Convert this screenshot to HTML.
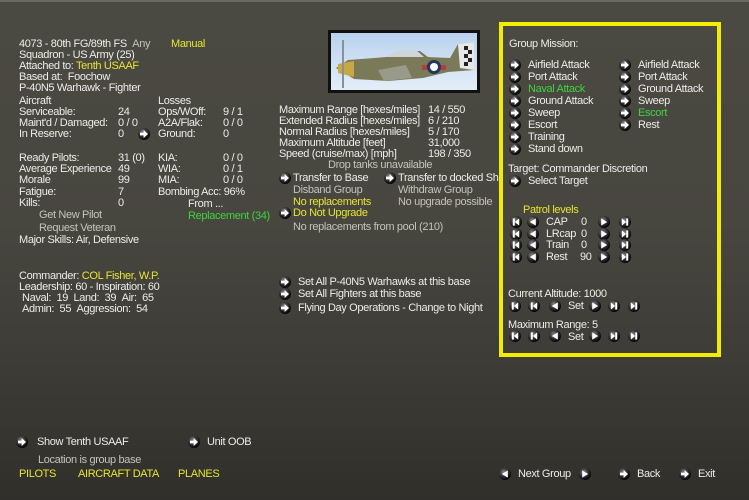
<!DOCTYPE html>
<html><head><meta charset="utf-8"><style>
*{margin:0;padding:0;box-sizing:border-box}
body{width:749px;height:500px;overflow:hidden;background:linear-gradient(180deg,#4b4a42 0%,#47463f 45%,#3d3c36 72%,#302f2b 100%);font-family:"Liberation Sans",sans-serif;font-size:11px;color:#ececec;position:relative;letter-spacing:-0.35px}
.t{position:absolute;line-height:14px;height:14px;white-space:nowrap}
.y{color:#e6e632}.g{color:#3fd23f}.d{color:#c4c4bc}
.b{position:absolute;width:12px;height:12px;border-radius:50%;background:radial-gradient(circle at 40% 35%,#888 0%,#333 40%,#000 75%)}
.b::after{content:'';position:absolute;left:2px;top:2px;width:8px;height:8px;background:#fff}
.r::after{clip-path:polygon(0 33%,45% 33%,45% 0,100% 50%,45% 100%,45% 67%,0 67%)}
.tl::after{clip-path:polygon(85% 5%,85% 95%,10% 50%)}
.tr::after{clip-path:polygon(15% 5%,15% 95%,90% 50%)}
.tl2::after{clip-path:polygon(90% 5%,90% 95%,35% 50%,35% 95%,10% 95%,10% 5%,35% 5%,35% 50%)}
.tr2::after{clip-path:polygon(10% 5%,10% 95%,65% 50%,65% 95%,90% 95%,90% 5%,65% 5%,65% 50%)}
#box{position:absolute;left:499px;top:22px;width:222px;height:335px;border:4px solid #f4ec00}
</style></head><body>
<div style="position:absolute;left:0;top:0;width:749px;height:2px;background:#6a6963"></div>
<div id="box"></div>

<div class="t" style="left:19px;top:37px">4073 - 80th FG/89th FS &nbsp;<span class="d">Any</span></div>
<div class="t y" style="left:171px;top:37px">Manual</div>
<div class="t" style="left:19px;top:48px">Squadron - US Army (25)</div>
<div class="t" style="left:19px;top:59px">Attached to: <span class="y">Tenth USAAF</span></div>
<div class="t" style="left:19px;top:70px">Based at: &nbsp;Foochow</div>
<div class="t" style="left:19px;top:81px">P-40N5 Warhawk - Fighter</div>

<div class="t" style="left:19px;top:94px">Aircraft</div>
<div class="t" style="left:19px;top:105px">Serviceable:</div>
<div class="t" style="left:19px;top:116px">Maint'd / Damaged:</div>
<div class="t" style="left:19px;top:127px">In Reserve:</div>
<div class="t" style="left:118px;top:105px">24</div>
<div class="t" style="left:118px;top:116px">0 / 0</div>
<div class="t" style="left:118px;top:127px">0</div>
<span class="b r" style="left:138px;top:128px"></span>
<div class="t" style="left:158px;top:94px">Losses</div>
<div class="t" style="left:158px;top:105px">Ops/WOff:</div>
<div class="t" style="left:158px;top:116px">A2A/Flak:</div>
<div class="t" style="left:158px;top:127px">Ground:</div>
<div class="t" style="left:223px;top:105px">9 / 1</div>
<div class="t" style="left:223px;top:116px">0 / 0</div>
<div class="t" style="left:223px;top:127px">0</div>

<div class="t" style="left:19px;top:151px">Ready Pilots:</div>
<div class="t" style="left:19px;top:162px">Average Experience</div>
<div class="t" style="left:19px;top:173px">Morale</div>
<div class="t" style="left:19px;top:185px">Fatigue:</div>
<div class="t" style="left:19px;top:196px">Kills:</div>
<div class="t" style="left:118px;top:151px">31 (0)</div>
<div class="t" style="left:118px;top:162px">49</div>
<div class="t" style="left:118px;top:173px">99</div>
<div class="t" style="left:118px;top:185px">7</div>
<div class="t" style="left:118px;top:196px">0</div>
<div class="t" style="left:158px;top:151px">KIA:</div>
<div class="t" style="left:158px;top:162px">WIA:</div>
<div class="t" style="left:158px;top:173px">MIA:</div>
<div class="t" style="left:158px;top:185px">Bombing Acc: 96%</div>
<div class="t" style="left:223px;top:151px">0 / 0</div>
<div class="t" style="left:223px;top:162px">0 / 1</div>
<div class="t" style="left:223px;top:173px">0 / 0</div>
<div class="t" style="left:188px;top:197px">From ...</div>
<div class="t g" style="left:188px;top:209px">Replacement (34)</div>
<div class="t d" style="left:39px;top:208px">Get New Pilot</div>
<div class="t d" style="left:39px;top:221px">Request Veteran</div>
<div class="t" style="left:19px;top:233px">Major Skills: Air, Defensive</div>

<svg style="position:absolute;left:328px;top:30px" width="152" height="63" viewBox="0 0 152 63">
<defs><linearGradient id="sk" x1="0" y1="0" x2="0" y2="1"><stop offset="0" stop-color="#b9d2ee"/><stop offset="1" stop-color="#e4eef8"/></linearGradient></defs>
<rect x="0" y="0" width="152" height="63" fill="#111"/>
<rect x="3" y="3" width="146" height="57" fill="url(#sk)"/>
<path d="M8 38 L20 30 L58 27 L70 21 L92 21 L100 27 L122 28 L130 14 L146 12 L146 40 L120 42 L95 48 L60 51 L26 49 Z" fill="#7b7a58"/>
<path d="M58 27 L68 21 L88 20 L96 27 Z" fill="#cfd5d8"/>
<path d="M130 14 L146 12 L146 40 L132 38 Z" fill="#e8e8e8"/>
<path d="M136 16h4v4h-4zM140 20h4v4h-4zM136 24h4v4h-4zM140 28h4v4h-4zM136 32h4v4h-4z" fill="#222"/>
<path d="M10 34 L26 31 L26 47 L10 43 Z" fill="#c8a840"/>
<rect x="94" y="35" width="24" height="5" fill="#b04040"/>
<circle cx="106" cy="37" r="7" fill="#23365c"/><circle cx="106" cy="37" r="4" fill="#fff"/>
<line x1="15" y1="10" x2="15" y2="58" stroke="#8890a0" stroke-width="2"/>
<path d="M50 40 L78 35 L84 48 L56 51 Z" fill="#9a9a8a"/>
</svg>

<div class="t" style="left:279px;top:103px">Maximum Range [hexes/miles]</div>
<div class="t" style="left:279px;top:114px">Extended Radius [hexes/miles]</div>
<div class="t" style="left:279px;top:125px">Normal Radius [hexes/miles]</div>
<div class="t" style="left:279px;top:136px">Maximum Altitude [feet]</div>
<div class="t" style="left:279px;top:147px">Speed (cruise/max) [mph]</div>
<div class="t" style="left:428px;top:103px">14 / 550</div>
<div class="t" style="left:428px;top:114px">6 / 210</div>
<div class="t" style="left:428px;top:125px">5 / 170</div>
<div class="t" style="left:428px;top:136px">31,000</div>
<div class="t" style="left:428px;top:147px">198 / 350</div>
<div class="t d" style="left:328px;top:158px">Drop tanks unavailable</div>
<span class="b r" style="left:279px;top:172px"></span>
<div class="t" style="left:293px;top:171px">Transfer to Base</div>
<span class="b r" style="left:384px;top:172px"></span>
<div class="t" style="left:398px;top:171px;width:101px;overflow:hidden">Transfer to docked Ship</div>
<div class="t d" style="left:293px;top:183px">Disband Group</div>
<div class="t d" style="left:398px;top:183px">Withdraw Group</div>
<div class="t y" style="left:293px;top:195px">No replacements</div>
<div class="t d" style="left:398px;top:195px">No upgrade possible</div>
<span class="b r" style="left:279px;top:207px"></span>
<div class="t y" style="left:293px;top:206px">Do Not Upgrade</div>
<div class="t d" style="left:293px;top:220px">No replacements from pool (210)</div>

<div class="t" style="left:19px;top:269px">Commander: <span class="y">COL Fisher, W.P.</span></div>
<div class="t" style="left:19px;top:280px">Leadership: 60 - Inspiration: 60</div>
<div class="t" style="left:22px;top:291px">Naval: &nbsp;19 &nbsp;Land: &nbsp;39 &nbsp;Air: &nbsp;65</div>
<div class="t" style="left:22px;top:302px">Admin: &nbsp;55 &nbsp;Aggression: &nbsp;54</div>
<span class="b r" style="left:279px;top:276px"></span>
<div class="t" style="left:298px;top:275px">Set All P-40N5 Warhawks at this base</div>
<span class="b r" style="left:279px;top:288px"></span>
<div class="t" style="left:298px;top:287px">Set All Fighters at this base</div>
<span class="b r" style="left:279px;top:302px"></span>
<div class="t" style="left:298px;top:301px">Flying Day Operations - Change to Night</div>

<div class="t" style="left:509px;top:37px">Group Mission:</div>
<span class="b r" style="left:509px;top:59px"></span><div class="t" style="left:528px;top:58px">Airfield Attack</div>
<span class="b r" style="left:509px;top:71px"></span><div class="t" style="left:528px;top:70px">Port Attack</div>
<span class="b r" style="left:509px;top:83px"></span><div class="t g" style="left:528px;top:82px">Naval Attack</div>
<span class="b r" style="left:509px;top:95px"></span><div class="t" style="left:528px;top:94px">Ground Attack</div>
<span class="b r" style="left:509px;top:107px"></span><div class="t" style="left:528px;top:106px">Sweep</div>
<span class="b r" style="left:509px;top:119px"></span><div class="t" style="left:528px;top:118px">Escort</div>
<span class="b r" style="left:509px;top:131px"></span><div class="t" style="left:528px;top:130px">Training</div>
<span class="b r" style="left:509px;top:143px"></span><div class="t" style="left:528px;top:142px">Stand down</div>
<span class="b r" style="left:619px;top:59px"></span><div class="t" style="left:638px;top:58px">Airfield Attack</div>
<span class="b r" style="left:619px;top:71px"></span><div class="t" style="left:638px;top:70px">Port Attack</div>
<span class="b r" style="left:619px;top:83px"></span><div class="t" style="left:638px;top:82px">Ground Attack</div>
<span class="b r" style="left:619px;top:95px"></span><div class="t" style="left:638px;top:94px">Sweep</div>
<span class="b r" style="left:619px;top:107px"></span><div class="t g" style="left:638px;top:106px">Escort</div>
<span class="b r" style="left:619px;top:119px"></span><div class="t" style="left:638px;top:118px">Rest</div>
<div class="t" style="left:508px;top:162px">Target: Commander Discretion</div>
<span class="b r" style="left:509px;top:175px"></span><div class="t" style="left:528px;top:174px">Select Target</div>

<div class="t y" style="left:523px;top:203px">Patrol levels</div>
<span class="b tl2" style="left:510px;top:216px"></span><span class="b tl" style="left:527px;top:216px"></span><div class="t" style="left:546px;top:215px">CAP</div><div class="t" style="left:581px;top:215px">0</div><span class="b tr" style="left:598px;top:216px"></span><span class="b tr2" style="left:619px;top:216px"></span>
<span class="b tl2" style="left:510px;top:228px"></span><span class="b tl" style="left:527px;top:228px"></span><div class="t" style="left:546px;top:227px">LRcap</div><div class="t" style="left:581px;top:227px">0</div><span class="b tr" style="left:598px;top:228px"></span><span class="b tr2" style="left:619px;top:228px"></span>
<span class="b tl2" style="left:510px;top:239px"></span><span class="b tl" style="left:527px;top:239px"></span><div class="t" style="left:546px;top:238px">Train</div><div class="t" style="left:581px;top:238px">0</div><span class="b tr" style="left:598px;top:239px"></span><span class="b tr2" style="left:619px;top:239px"></span>
<span class="b tl2" style="left:510px;top:251px"></span><span class="b tl" style="left:527px;top:251px"></span><div class="t" style="left:546px;top:250px">Rest</div><div class="t" style="left:580px;top:250px">90</div><span class="b tr" style="left:598px;top:251px"></span><span class="b tr2" style="left:619px;top:251px"></span>

<div class="t" style="left:508px;top:287px">Current Altitude: 1000</div>
<span class="b tl2" style="left:509px;top:300px"></span><span class="b tl2" style="left:528px;top:300px"></span><span class="b tl" style="left:549px;top:300px"></span>
<div class="t" style="left:568px;top:299px">Set</div>
<span class="b tr" style="left:589px;top:300px"></span><span class="b tr2" style="left:608px;top:300px"></span><span class="b tr2" style="left:628px;top:300px"></span>
<div class="t" style="left:508px;top:318px">Maximum Range: 5</div>
<span class="b tl2" style="left:509px;top:330px"></span><span class="b tl2" style="left:528px;top:330px"></span><span class="b tl" style="left:549px;top:330px"></span>
<div class="t" style="left:568px;top:330px">Set</div>
<span class="b tr" style="left:589px;top:330px"></span><span class="b tr2" style="left:608px;top:330px"></span><span class="b tr2" style="left:628px;top:330px"></span>

<span class="b r" style="left:16px;top:436px"></span><div class="t" style="left:37px;top:435px">Show Tenth USAAF</div>
<span class="b r" style="left:188px;top:436px"></span><div class="t" style="left:207px;top:435px">Unit OOB</div>
<div class="t d" style="left:38px;top:453px">Location is group base</div>
<div class="t y" style="left:19px;top:467px">PILOTS</div>
<div class="t y" style="left:78px;top:467px">AIRCRAFT DATA</div>
<div class="t y" style="left:178px;top:467px">PLANES</div>
<span class="b tl" style="left:499px;top:468px"></span><div class="t" style="left:518px;top:467px">Next Group</div><span class="b tr" style="left:579px;top:468px"></span>
<span class="b r" style="left:618px;top:468px"></span><div class="t" style="left:637px;top:467px">Back</div>
<span class="b r" style="left:679px;top:468px"></span><div class="t" style="left:698px;top:467px">Exit</div>
</body></html>
